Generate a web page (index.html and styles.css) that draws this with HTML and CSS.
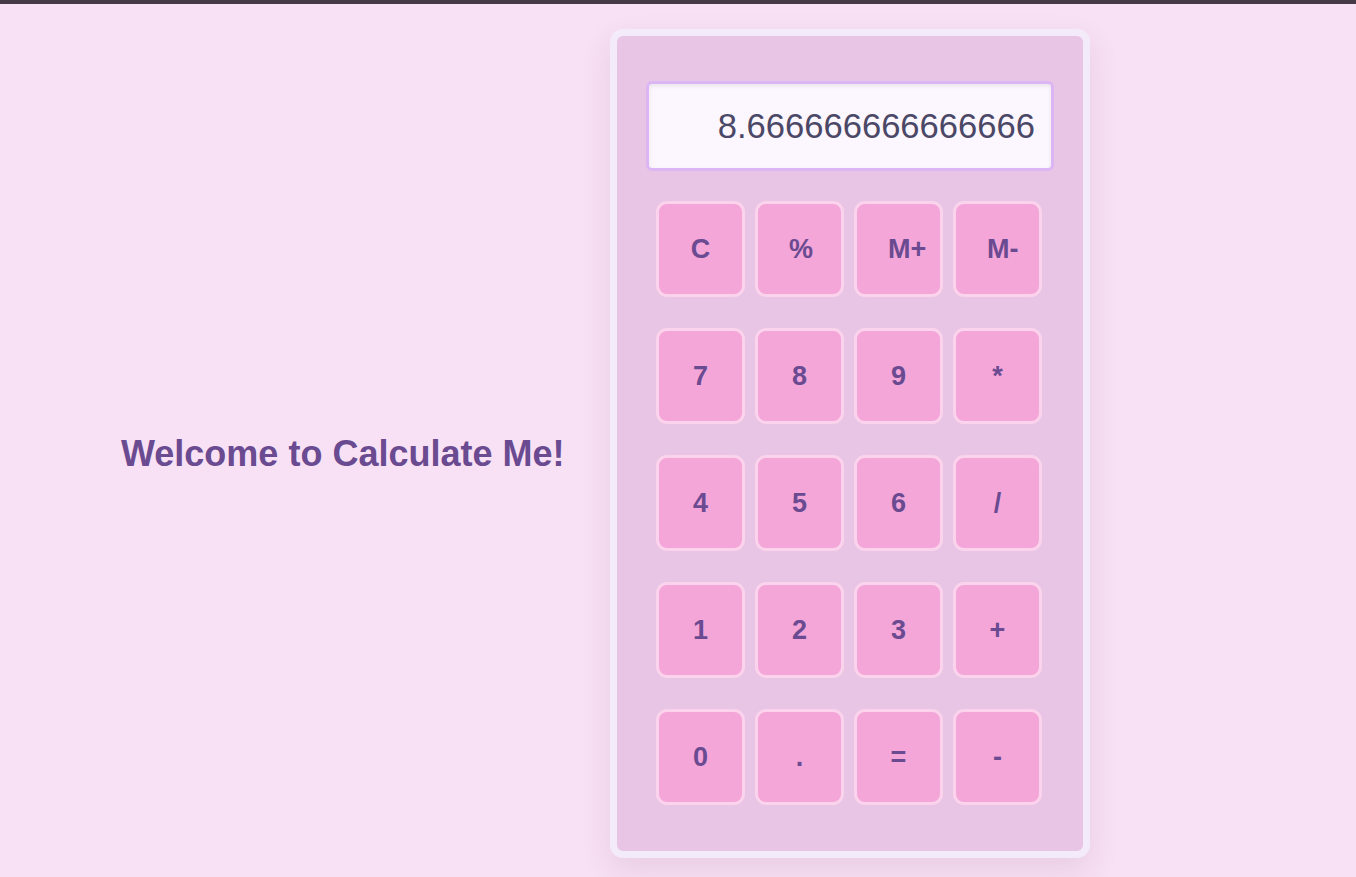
FILE: index.html
```html
<!DOCTYPE html>
<html lang="en">
<head>
<meta charset="utf-8">
<title>Calculate Me</title>
<link rel="stylesheet" href="styles.css">
</head>
<body>
<div class="topbar"></div>
<main class="page">
  <h1 class="welcome">Welcome to Calculate Me!</h1>
  <div class="calc">
    <div class="display">8.666666666666666</div>
    <div class="keys">
      <button class="key">C</button>
      <button class="key">%</button>
      <button class="key">M+</button>
      <button class="key">M-</button>
      <button class="key">7</button>
      <button class="key">8</button>
      <button class="key">9</button>
      <button class="key">*</button>
      <button class="key">4</button>
      <button class="key">5</button>
      <button class="key">6</button>
      <button class="key">/</button>
      <button class="key">1</button>
      <button class="key">2</button>
      <button class="key">3</button>
      <button class="key">+</button>
      <button class="key">0</button>
      <button class="key">.</button>
      <button class="key">=</button>
      <button class="key">-</button>
    </div>
  </div>
</main>
</body>
</html>
```
FILE: styles.css
```css
* { box-sizing: border-box; }
html, body { margin: 0; padding: 0; }
body {
  background: #f8e1f4;
  font-family: "Liberation Sans", Arial, sans-serif;
  height: 877px;
  overflow: hidden;
}
.topbar {
  height: 4px;
  background: #463a47;
}
.page {
  display: flex;
  align-items: center;
  padding-top: 25px;
}
.welcome {
  margin: 20px 0 0 121px;
  width: 444px;
  font-size: 36px;
  font-weight: bold;
  color: #6a4a90;
  white-space: nowrap;
}
.calc {
  margin-left: 45px;
  width: 480px;
  height: 829px;
  border: 7px solid #f3ebfa;
  border-radius: 13px;
  background: #e8c5e4;
  box-shadow: 0 12px 30px rgba(120, 60, 110, 0.12);
  padding: 45px 0 0 29px;
}
.display {
  width: 408px;
  height: 90px;
  border: 3px solid #dcb6f4;
  border-radius: 6px;
  background: #fcf6fe;
  box-shadow: inset 0 2px 4px rgba(0, 0, 0, 0.08);
  color: #4a4866;
  font-size: 34.6px;
  text-align: right;
  padding: 0 16px 0 0;
  line-height: 84px;
}
.keys {
  margin: 30px 0 0 10px;
  display: grid;
  grid-template-columns: repeat(4, 89px);
  grid-auto-rows: 96px;
  column-gap: 10px;
  row-gap: 31px;
}
.key {
  width: 89px;
  height: 96px;
  border: 3px solid #fcd3ec;
  border-radius: 11px;
  background: #f4a6d8;
  color: #6a4a90;
  font-family: "Liberation Sans", Arial, sans-serif;
  font-size: 27px;
  font-weight: bold;
  padding: 0 31px;
  text-align: center;
  cursor: pointer;
}
```
